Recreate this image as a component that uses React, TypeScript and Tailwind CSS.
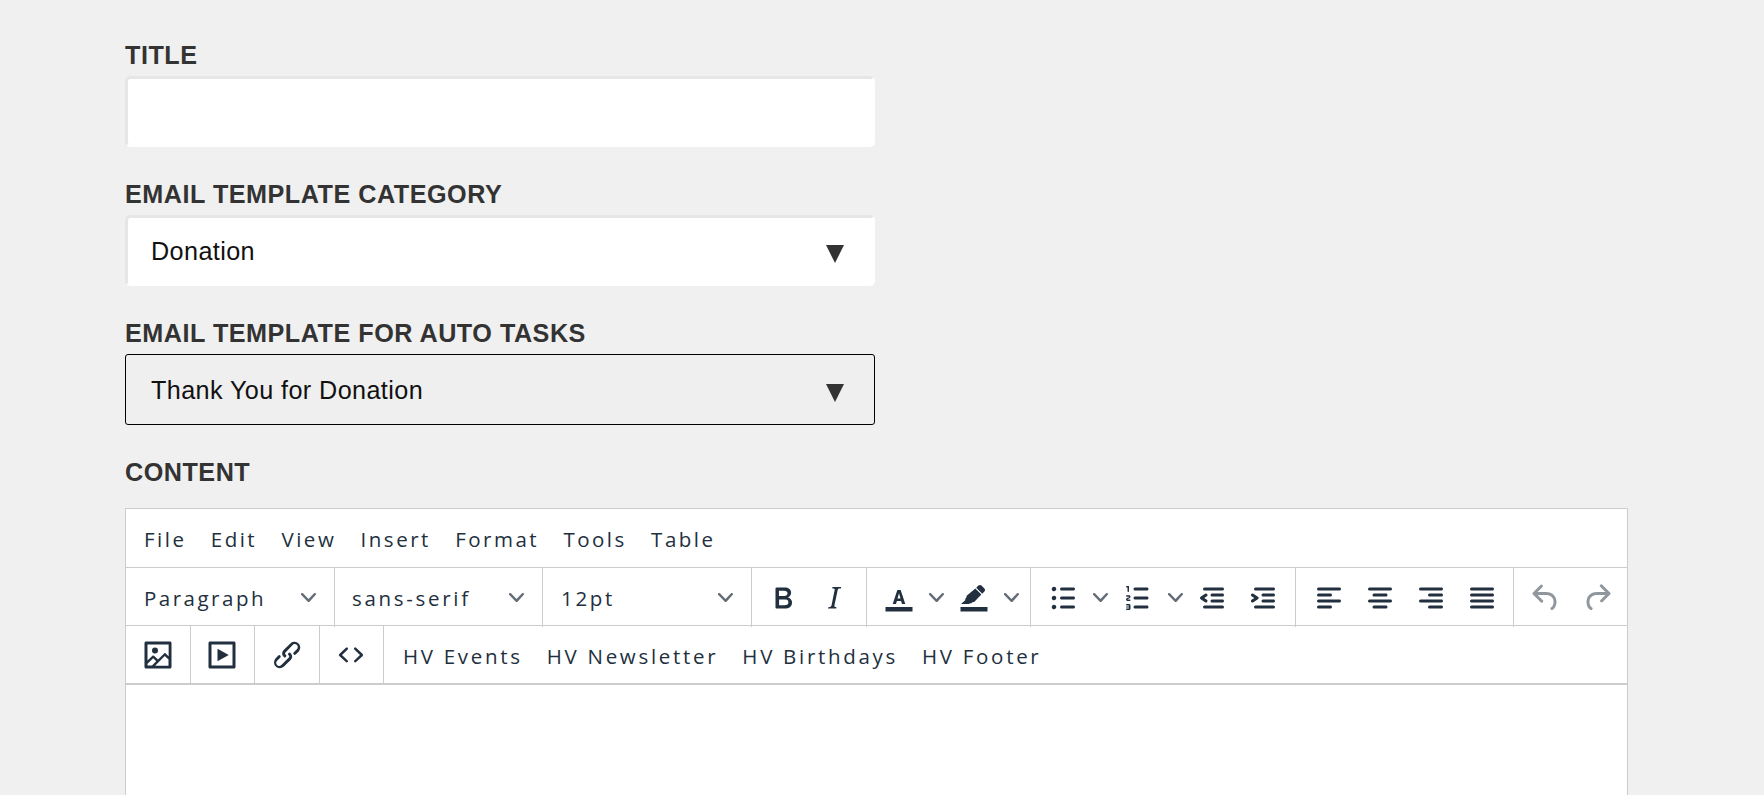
import React from "react";

const P: Record<string, string> = {
  bold: "M7.8 19c-.3 0-.5 0-.6-.2l-.2-.5V5.7c0-.2 0-.4.2-.5l.6-.2h5c1.5 0 2.7.3 3.5 1 .7.6 1.1 1.4 1.1 2.5a3 3 0 0 1-.6 1.9c-.4.6-1 1-1.6 1.2.4.1.9.3 1.3.6s.8.7 1 1.2c.4.4.5 1 .5 1.6 0 1.3-.4 2.3-1.3 3-.8.7-2.1 1-3.8 1H7.8zm5-8.3c.6 0 1.2-.1 1.6-.5.4-.3.6-.7.6-1.3 0-1.1-.8-1.7-2.3-1.7H9.3v3.5h3.4zm.5 6c.7 0 1.3-.1 1.7-.4.4-.4.6-.9.6-1.5s-.2-1-.7-1.4c-.4-.3-1-.4-2-.4H9.4v3.8h4z",
  italic: "M16.7 4.7l-.1.9h-.3c-.6 0-1 0-1.4.3-.3.3-.4.6-.5 1.1l-2.1 9.8v.6c0 .5.4.8 1.2.8h.2l-.2.8H8l.2-.8h.2c1.1 0 1.8-.5 2-1.5l2-9.8.1-.5c0-.6-.4-.8-1.4-.8h-.3l.2-.9h5.8z",
  textColor: "M3 18h18v3H3zM7.8 16 10.9 6.7h2.2L16.2 16h-2.2l-.6-2h-2.8l-.6 2zM11 12.3h2L12 8.9z",
  highlight: "M3 18h18v3H3zM14.9 3.7c.6-.6 1.5-.6 2.1 0l1.9 1.9c.6.6.6 1.5 0 2.1l-1.4 1.4-4-4zM12.9 5.7l4 4-4.8 5-1.2.2-.9.7-.6-.1-.8.5H3.4l2.9-2.6-.2-.7.8-1 .2-1.2z",
  ul: "M11 5h8c.6 0 1 .4 1 1s-.4 1-1 1h-8a1 1 0 0 1 0-2zm0 6h8c.6 0 1 .4 1 1s-.4 1-1 1h-8a1 1 0 0 1 0-2zm0 6h8c.6 0 1 .4 1 1s-.4 1-1 1h-8a1 1 0 0 1 0-2zM4.5 6c0-.4.1-.8.4-1 .3-.4.7-.5 1.1-.5.4 0 .8.1 1 .4.4.3.5.7.5 1.1 0 .4-.1.8-.4 1-.3.4-.7.5-1.1.5-.4 0-.8-.1-1-.4-.4-.3-.5-.7-.5-1.1zm0 6c0-.4.1-.8.4-1 .3-.4.7-.5 1.1-.5.4 0 .8.1 1 .4.4.3.5.7.5 1.1 0 .4-.1.8-.4 1-.3.4-.7.5-1.1.5-.4 0-.8-.1-1-.4-.4-.3-.5-.7-.5-1.1zm0 6c0-.4.1-.8.4-1 .3-.4.7-.5 1.1-.5.4 0 .8.1 1 .4.4.3.5.7.5 1.1 0 .4-.1.8-.4 1-.3.4-.7.5-1.1.5-.4 0-.8-.1-1-.4-.4-.3-.5-.7-.5-1.1z",
  ol: "M10 17h8c.6 0 1 .4 1 1s-.4 1-1 1h-8a1 1 0 0 1 0-2zm0-6h8c.6 0 1 .4 1 1s-.4 1-1 1h-8a1 1 0 0 1 0-2zm0-6h8c.6 0 1 .4 1 1s-.4 1-1 1h-8a1 1 0 1 1 0-2zM6 4v3.5c0 .3-.2.5-.5.5a.5.5 0 0 1-.5-.5V5h-.5a.5.5 0 0 1 0-1H6zm-1 8.8l.2.2h1.3c.3 0 .5.2.5.5s-.2.5-.5.5H4.9a1 1 0 0 1-.9-1V13c0-.4.3-.8.6-1l1.2-.4.2-.3a.2.2 0 0 0-.2-.2H4.5a.5.5 0 0 1-.5-.5c0-.3.2-.5.5-.5h1.6c.5 0 .9.4.9 1v.1c0 .4-.3.8-.6 1l-1.2.4-.2.3zM7 17v2c0 .6-.4 1-1 1H4.5a.5.5 0 0 1 0-1h1.2c.2 0 .3-.1.3-.3 0-.2-.1-.3-.3-.3H4.4a.4.4 0 1 1 0-.8h1.3c.2 0 .3-.1.3-.3 0-.2-.1-.3-.3-.3H4.5a.5.5 0 1 1 0-1H6c.6 0 1 .4 1 1z",
  outdent: "M7 5h12c.6 0 1 .4 1 1s-.4 1-1 1H7a1 1 0 1 1 0-2zm5 4h7c.6 0 1 .4 1 1s-.4 1-1 1h-7a1 1 0 0 1 0-2zm0 4h7c.6 0 1 .4 1 1s-.4 1-1 1h-7a1 1 0 0 1 0-2zm-5 4h12a1 1 0 0 1 0 2H7a1 1 0 0 1 0-2zm1.6-3.8a1 1 0 0 1-1.2 1.6l-3-2a1 1 0 0 1 0-1.6l3-2a1 1 0 0 1 1.2 1.6L6.8 12l1.8 1.2z",
  indent: "M7 5h12c.6 0 1 .4 1 1s-.4 1-1 1H7a1 1 0 1 1 0-2zm5 4h7c.6 0 1 .4 1 1s-.4 1-1 1h-7a1 1 0 0 1 0-2zm0 4h7c.6 0 1 .4 1 1s-.4 1-1 1h-7a1 1 0 0 1 0-2zm-5 4h12a1 1 0 0 1 0 2H7a1 1 0 0 1 0-2zm-2.6-3.8L6.2 12l-1.8-1.2a1 1 0 0 1 1.2-1.6l3 2a1 1 0 0 1 0 1.6l-3 2a1 1 0 1 1-1.2-1.6z",
  alignLeft: "M5 5h14c.6 0 1 .4 1 1s-.4 1-1 1H5a1 1 0 1 1 0-2zm0 4h8c.6 0 1 .4 1 1s-.4 1-1 1H5a1 1 0 1 1 0-2zm0 8h8c.6 0 1 .4 1 1s-.4 1-1 1H5a1 1 0 0 1 0-2zm0-4h14c.6 0 1 .4 1 1s-.4 1-1 1H5a1 1 0 0 1 0-2z",
  alignCenter: "M5 5h14c.6 0 1 .4 1 1s-.4 1-1 1H5a1 1 0 1 1 0-2zm3 4h8c.6 0 1 .4 1 1s-.4 1-1 1H8a1 1 0 1 1 0-2zm0 8h8c.6 0 1 .4 1 1s-.4 1-1 1H8a1 1 0 0 1 0-2zm-3-4h14c.6 0 1 .4 1 1s-.4 1-1 1H5a1 1 0 0 1 0-2z",
  alignRight: "M5 5h14c.6 0 1 .4 1 1s-.4 1-1 1H5a1 1 0 1 1 0-2zm6 4h8c.6 0 1 .4 1 1s-.4 1-1 1h-8a1 1 0 0 1 0-2zm0 8h8c.6 0 1 .4 1 1s-.4 1-1 1h-8a1 1 0 0 1 0-2zm-6-4h14c.6 0 1 .4 1 1s-.4 1-1 1H5a1 1 0 0 1 0-2z",
  justify: "M5 5h14c.6 0 1 .4 1 1s-.4 1-1 1H5a1 1 0 1 1 0-2zm0 4h14c.6 0 1 .4 1 1s-.4 1-1 1H5a1 1 0 1 1 0-2zm0 4h14c.6 0 1 .4 1 1s-.4 1-1 1H5a1 1 0 0 1 0-2zm0 4h14c.6 0 1 .4 1 1s-.4 1-1 1H5a1 1 0 0 1 0-2z",
  undo: "M6.4 8H12c3.7 0 6.2 2 6.8 5.1.6 2.7-.4 5.6-2.3 6.8a1 1 0 0 1-1-1.8c1.1-.6 1.8-2.7 1.4-4.6-.5-2.1-2.1-3.5-4.9-3.5H6.4l3.3 3.3a1 1 0 1 1-1.4 1.4l-5-5a1 1 0 0 1 0-1.4l5-5a1 1 0 0 1 1.4 1.4L6.4 8z",
  redo: "M17.6 10H12c-2.8 0-4.4 1.4-4.9 3.5-.4 2 .3 4 1.4 4.6a1 1 0 1 1-1 1.8c-2-1.2-2.9-4.1-2.3-6.8.6-3 3-5.1 6.8-5.1h5.6l-3.3-3.3a1 1 0 1 1 1.4-1.4l5 5a1 1 0 0 1 0 1.4l-5 5a1 1 0 0 1-1.4-1.4l3.3-3.3z",
  image: "M5 15.7l3.3-3.2c.3-.3.7-.3 1 0L12 15l4.1-4c.3-.4.8-.4 1 0l2 1.9V5H5v10.7zM5 18V19h3l2.8-2.9-2-2L5 17.9zm14-3l-2.5-2.4-6.4 6.5H19v-4zM4 3h16c.6 0 1 .4 1 1v16c0 .6-.4 1-1 1H4a1 1 0 0 1-1-1V4c0-.6.4-1 1-1zm6 8a2 2 0 1 0 0-4 2 2 0 0 0 0 4z",
  media: "M4 3h16c.6 0 1 .4 1 1v16c0 .6-.4 1-1 1H4a1 1 0 0 1-1-1V4c0-.6.4-1 1-1zm1 2v14h14V5H5zm4 2.8 7.5 4.2L9 16.2z",
  link: "M6.2 12.3a1 1 0 0 1 1.4 1.4l-2 2a2 2 0 1 0 2.8 2.8l4.8-4.8a1 1 0 0 0 0-1.4 1 1 0 1 1 1.4-1.3 2.9 2.9 0 0 1 0 4.1l-4.8 4.8a3.9 3.9 0 0 1-5.5-5.5l1.9-2.1zm11.6-.6a1 1 0 0 1-1.4-1.4l2-2a2 2 0 1 0-2.8-2.8L11 10.3a1 1 0 0 0 0 1.4A1 1 0 1 1 9.6 13a2.9 2.9 0 0 1 0-4.1l4.8-4.8a3.9 3.9 0 0 1 5.5 5.5l-2.1 2.1z",
  code: "M9.8 15.7c.3.3.3.8 0 1-.3.4-.9.4-1.2 0l-4.4-4.1a.8.8 0 0 1 0-1.2l4.4-4.2c.3-.3.9-.3 1.2 0 .3.3.3.8 0 1.1L6 12l3.8 3.7zM14.2 15.7c-.3.3-.3.8 0 1 .4.4.9.4 1.2 0l4.4-4.1c.3-.3.3-.9 0-1.2l-4.4-4.2a.8.8 0 0 0-1.2 0c-.3.3-.3.8 0 1.1L18 12l-3.8 3.7z",
};

function Icon({ name, muted }: { name: string; muted?: boolean }) {
  return (
    <svg viewBox="0 0 24 24" className={muted ? "h-9 w-9 fill-[#222f3e] opacity-50" : "h-9 w-9 fill-[#222f3e]"} fillRule="evenodd">
      <path d={P[name]} />
    </svg>
  );
}

function Chevron() {
  return (
    <svg viewBox="0 0 10 10" className="h-[15px] w-[15px] fill-[#222f3e] opacity-70">
      <path d="M8.7 2.2c.3-.3.8-.3 1 0 .4.4.4.9 0 1.2L5.7 7.8c-.3.3-.9.3-1.2 0L.2 3.4a.8.8 0 0 1 0-1.2c.3-.3.8-.3 1.1 0L5 6l3.7-3.8z" />
    </svg>
  );
}

function Btn({ name, muted }: { name: string; muted?: boolean }) {
  return (
    <div className="flex h-full w-[51px] items-center justify-center">
      <Icon name={name} muted={muted} />
    </div>
  );
}

function Split({ name }: { name: string }) {
  return (
    <>
      <div className="flex h-full w-[54px] items-center justify-center">
        <Icon name={name} />
      </div>
      <div className="flex h-full w-[21px] items-center justify-center">
        <Chevron />
      </div>
    </>
  );
}

function Drop({ label, w, tight }: { label: string; w: string; tight?: boolean }) {
  return (
    <div className={`flex h-[59px] shrink-0 items-center justify-between border-r border-[#cccccc] pr-[18px] ${w}`}>
      <span className={tight ? "pt-[2px] tracking-[2.5px]" : "pt-[2px]"}>{label}</span>
      <Chevron />
    </div>
  );
}

function Triangle() {
  return (
    <svg viewBox="0 0 18 18" className="mt-[7px] h-[18px] w-[18px] fill-[#333333]">
      <path d="M0 0h18L9 18z" />
    </svg>
  );
}

function Label({ children, mb }: { children: React.ReactNode; mb: string }) {
  return (
    <div className={`h-[30px] text-[25.2px] font-bold leading-[30px] tracking-[0.5px] text-[#333333] ${mb}`}>{children}</div>
  );
}

const plain = "h-[71px] w-[750px] rounded-[5px] border-[3px] border-t-[#e6e6e6] border-l-[#e6e6e6] border-r-white border-b-white bg-white";

export default function App() {
  return (
    <div className="h-[795px] overflow-hidden bg-[#f0f0f0] pl-[125px] pt-[40px] font-['Liberation_Sans',Arial,sans-serif]">
      <Label mb="mb-[6px]">TITLE</Label>
      <div className={`${plain} mb-[32px]`} />

      <Label mb="mb-[6px]">EMAIL TEMPLATE CATEGORY</Label>
      <div className={`${plain} mb-[32px] flex items-center justify-between pl-[23px] pr-[28px] text-[25.2px] tracking-[0.4px] text-[#111111]`}>
        <span className="pt-[2px]">Donation</span>
        <Triangle />
      </div>

      <Label mb="mb-[6px]">EMAIL TEMPLATE FOR AUTO TASKS</Label>
      <div className="mb-[32px] flex h-[71px] w-[750px] items-center justify-between rounded-[3px] border border-black bg-[#efefef] pl-[25px] pr-[30px] text-[25.2px] tracking-[0.4px] text-[#111111]">
        <span className="pt-[2px]">Thank You for Donation</span>
        <Triangle />
      </div>

      <Label mb="mb-[21px]">CONTENT</Label>

      <div className="w-[1503px] border-x border-t border-[#cccccc] bg-white pb-[200px] font-['Open_Sans',sans-serif] text-[20.5px] tracking-[2.7px] text-[#222f3e]">
        <div className="flex h-[59px] items-center gap-[24.3px] border-b border-[#cccccc] pl-[18px] pt-[2px] tracking-[2.5px]">
          <span>File</span>
          <span>Edit</span>
          <span>View</span>
          <span>Insert</span>
          <span>Format</span>
          <span>Tools</span>
          <span>Table</span>
        </div>

        <div className="flex h-[58px] border-b border-[#cccccc]">
          <Drop label="Paragraph" w="w-[209px] pl-[18px]" tight />
          <Drop label="sans-serif" w="w-[208px] pl-[17px]" />
          <Drop label="12pt" w="w-[209px] pl-[18px]" />
          <div className="flex h-[59px] w-[115px] shrink-0 border-r border-[#cccccc] pl-[5px]">
            <Btn name="bold" />
            <Btn name="italic" />
          </div>
          <div className="flex h-[59px] w-[164px] shrink-0 border-r border-[#cccccc] pl-[5px]">
            <Split name="textColor" />
            <Split name="highlight" />
          </div>
          <div className="flex h-[59px] w-[265px] shrink-0 border-r border-[#cccccc] pl-[5px]">
            <Split name="ul" />
            <Split name="ol" />
            <Btn name="outdent" />
            <Btn name="indent" />
          </div>
          <div className="flex h-[59px] w-[218px] shrink-0 border-r border-[#cccccc] pl-[7px]">
            <Btn name="alignLeft" />
            <Btn name="alignCenter" />
            <Btn name="alignRight" />
            <Btn name="justify" />
          </div>
          <div className="flex h-[59px] pl-[6px]">
            <Btn name="undo" muted />
            <Btn name="redo" muted />
          </div>
        </div>

        <div className="flex h-[59px] items-stretch border-b-2 border-[#cccccc]">
          <div className="flex w-[65px] items-center justify-center border-r border-[#cccccc]"><Icon name="image" /></div>
          <div className="flex w-[64px] items-center justify-center border-r border-[#cccccc] pr-[2px]"><Icon name="media" /></div>
          <div className="flex w-[65px] items-center justify-center border-r border-[#cccccc]"><Icon name="link" /></div>
          <div className="flex w-[64px] items-center justify-center border-r border-[#cccccc] pr-[2px]"><Icon name="code" /></div>
          <div className="flex items-center gap-[24px] pl-[19px] pt-[4px]">
            <span>HV Events</span>
            <span>HV Newsletter</span>
            <span>HV Birthdays</span>
            <span>HV Footer</span>
          </div>
        </div>
      </div>
    </div>
  );
}
